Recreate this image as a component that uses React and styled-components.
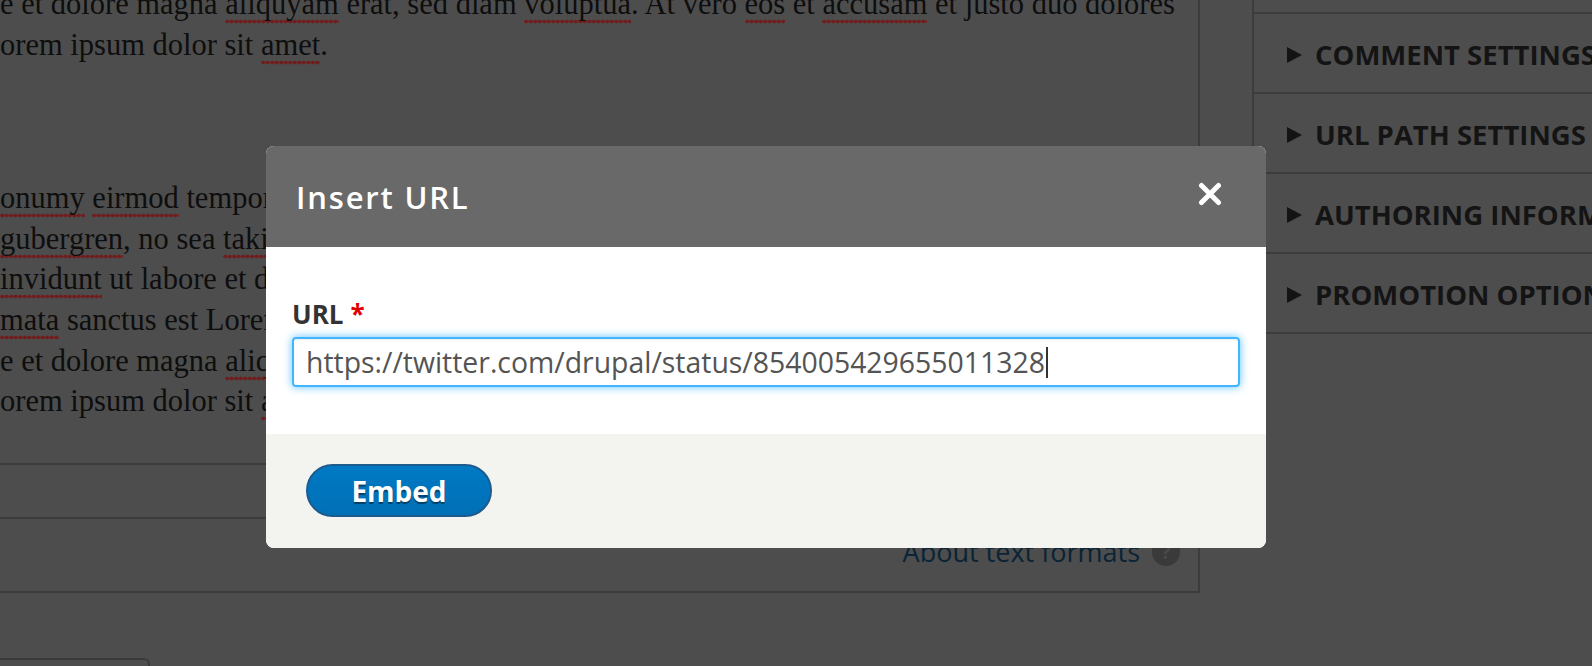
import React from "react"
import styled, { createGlobalStyle } from "styled-components"

const GlobalStyle = createGlobalStyle`
  html, body {
    margin: 0;
    padding: 0;
  }
  body {
    background: #4d4d4d;
    font-family: "Open Sans", "Noto Sans", sans-serif;
    overflow: hidden;
  }
`

const Page = styled.div`
  position: relative;
  display: flex;
  align-items: flex-start;
  width: 1592px;
  height: 666px;
  overflow: hidden;
  background: #4d4d4d;
`

const EditorColumn = styled.div`
  width: 1200px;
  flex-shrink: 0;
  display: flex;
  flex-direction: column;
`

const EditorFrame = styled.div`
  border-right: 2px solid #3c3c3c;
  border-bottom: 2px solid #3c3c3c;
`

const EditorBody = styled.div`
  height: 463px;
  overflow: hidden;
  border-bottom: 2px solid #3c3c3c;
  font-family: "Liberation Serif", "Times New Roman", serif;
  font-size: 30.5px;
  line-height: 40.6px;
  color: #0e0e0e;
  white-space: nowrap;
`

const Paragraph = styled.div`
  margin-top: ${(p) => p.$top || 0}px;
  margin-bottom: ${(p) => p.$bottom || 0}px;
`

const Misspelled = styled.span`
  padding-bottom: 3px;
  background-image: radial-gradient(circle, #701d1d 1.8px, transparent 2.2px);
  background-size: 4.5px 5px;
  background-repeat: repeat-x;
  background-position: 0 100%;
`

const PathBar = styled.div`
  height: 52px;
  border-bottom: 2px solid #3c3c3c;
`

const FormatBar = styled.div`
  height: 72px;
  box-sizing: border-box;
  padding: 15px 18px 0 0;
  display: flex;
  justify-content: flex-end;
  align-items: flex-start;
`

const HelpLink = styled.a`
  display: flex;
  align-items: center;
  gap: 12px;
  font-size: 27px;
  line-height: 36px;
  color: #0a2436;
  text-decoration: none;
`

const HelpIcon = styled.span`
  width: 28px;
  height: 28px;
  border-radius: 50%;
  background: #3a3a3a;
  color: #4a4a4a;
  font-size: 20px;
  font-weight: 700;
  line-height: 28px;
  text-align: center;
`

const BottomBox = styled.div`
  margin: 65px 0 0 -4px;
  width: 154px;
  height: 40px;
  box-sizing: border-box;
  border: 2px solid #3a3a3a;
  border-radius: 0 6px 0 0;
`

const Sidebar = styled.div`
  flex: 1;
  margin: -66px 0 0 52px;
  border-left: 2px solid #3c3c3c;
  white-space: nowrap;
`

const SidebarItem = styled.div`
  height: 75px;
  border-bottom: 2px solid #3c3c3c;
  display: flex;
  align-items: center;
  gap: 13px;
  padding: 3px 0 0 33px;
  font-size: 27.5px;
  font-weight: 700;
  text-transform: uppercase;
  color: #141414;
`

const Dialog = styled.div`
  position: absolute;
  left: 266px;
  top: 146px;
  width: 1000px;
  border-radius: 8px;
  overflow: hidden;
  background: #fff;
`

const DialogHeader = styled.div`
  display: flex;
  align-items: flex-start;
  padding: 31px 44px 30px 30px;
  background: #696969;
`

const DialogTitle = styled.h2`
  flex: 1;
  margin: 0;
  font-size: 31px;
  font-weight: 600;
  line-height: 40px;
  letter-spacing: 1.8px;
  color: #fff;
`

const CloseButton = styled.button`
  width: 24px;
  height: 24px;
  margin-top: 5px;
  padding: 0;
  border: 0;
  background: none;
  display: block;
`

const DialogBody = styled.div`
  padding: 49px 26px 47px;
`

const FieldLabel = styled.label`
  display: block;
  margin-bottom: 5px;
  font-size: 26px;
  font-weight: 700;
  line-height: 36px;
  color: #333;
`

const Required = styled.span`
  margin-left: 7px;
  color: #e00000;
`

const FieldBox = styled.div`
  height: 50px;
  box-sizing: border-box;
  display: flex;
  align-items: center;
  padding: 0 12px;
  border: 2px solid #40b6ff;
  border-radius: 4px;
  box-shadow: 0 0 8px rgba(64, 182, 255, 0.85), inset 0 1px 2px rgba(0, 0, 0, 0.08);
  font-size: 28.4px;
  color: #545454;
  white-space: nowrap;
`

const Caret = styled.span`
  display: inline-block;
  width: 2px;
  height: 31px;
  margin-left: 1px;
  background: #333;
`

const DialogFooter = styled.div`
  padding: 30px 40px 31px;
  background: #f3f4ef;
`

const PrimaryButton = styled.button`
  width: 186px;
  height: 53px;
  padding: 0;
  border: 2px solid #1d5b8f;
  border-radius: 27px;
  background: linear-gradient(#0079c4, #0070b6);
  color: #fff;
  font-family: "Open Sans", "Noto Sans", sans-serif;
  font-size: 28px;
  font-weight: 700;
  text-shadow: 0 2px 1px rgba(0, 0, 0, 0.45);
`

const Triangle = () => (
  <svg width="15" height="16" viewBox="0 0 15 16">
    <polygon points="0,0 15,8 0,16" fill="#141414" />
  </svg>
)

const CloseIcon = () => (
  <svg width="24" height="24" viewBox="0 0 24 24">
    <path d="M3.5 3.5L20.5 20.5M20.5 3.5L3.5 20.5" stroke="#fff" strokeWidth="5" strokeLinecap="round" />
  </svg>
)

const sidebarSections = [
  "Menu settings",
  "Comment settings",
  "URL path settings",
  "Authoring information",
  "Promotion options",
]

export default function App() {
  return (
    <>
      <GlobalStyle />
      <Page>
        <EditorColumn>
          <EditorFrame>
            <EditorBody>
              <Paragraph $top={-16}>
                e et dolore magna <Misspelled>aliquyam</Misspelled> erat, sed diam <Misspelled>voluptua</Misspelled>. At vero{" "}
                <Misspelled>eos</Misspelled> et <Misspelled>accusam</Misspelled> et justo duo dolores
              </Paragraph>
              <Paragraph $bottom={113}>
                orem ipsum dolor sit <Misspelled>amet</Misspelled>.
              </Paragraph>
              <Paragraph>
                <Misspelled>onumy</Misspelled> <Misspelled>eirmod</Misspelled> tempor invidunt ut labore et dolore magna
              </Paragraph>
              <Paragraph>
                <Misspelled>gubergren</Misspelled>, no sea <Misspelled>takimata</Misspelled> sanctus est Lorem ipsum
              </Paragraph>
              <Paragraph>
                <Misspelled>invidunt</Misspelled> ut labore et dolore magna aliquyam erat
              </Paragraph>
              <Paragraph>
                <Misspelled>mata</Misspelled> sanctus est Lorem ipsum dolor sit amet.
              </Paragraph>
              <Paragraph>
                e et dolore magna <Misspelled>aliquyam</Misspelled> erat, sed diam
              </Paragraph>
              <Paragraph>
                orem ipsum dolor sit <Misspelled>amet</Misspelled>.
              </Paragraph>
            </EditorBody>
            <PathBar />
            <FormatBar>
              <HelpLink href="#">
                About text formats <HelpIcon>?</HelpIcon>
              </HelpLink>
            </FormatBar>
          </EditorFrame>
          <BottomBox />
        </EditorColumn>

        <Sidebar>
          {sidebarSections.map((name) => (
            <SidebarItem key={name}>
              <Triangle />
              {name}
            </SidebarItem>
          ))}
        </Sidebar>

        <Dialog role="dialog">
          <DialogHeader>
            <DialogTitle>Insert URL</DialogTitle>
            <CloseButton aria-label="Close">
              <CloseIcon />
            </CloseButton>
          </DialogHeader>
          <DialogBody>
            <FieldLabel>
              URL<Required>*</Required>
            </FieldLabel>
            <FieldBox>
              https://twitter.com/drupal/status/854005429655011328
              <Caret />
            </FieldBox>
          </DialogBody>
          <DialogFooter>
            <PrimaryButton>Embed</PrimaryButton>
          </DialogFooter>
        </Dialog>
      </Page>
    </>
  )
}
